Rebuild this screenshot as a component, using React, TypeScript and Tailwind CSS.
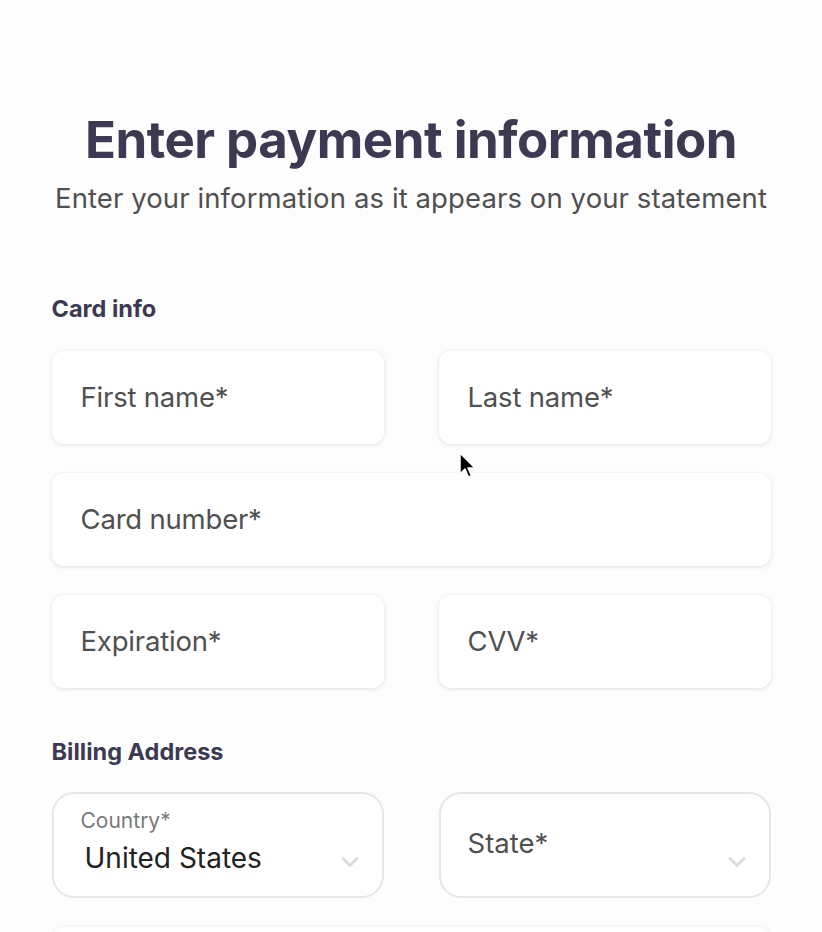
import { ChevronDown } from "lucide-react";

function TextField({ label }: { label: string }) {
  return (
    <div className="h-[93px] rounded-[12px] bg-white shadow-[0_1px_4px_rgba(0,0,0,0.12)] flex items-center px-[29px]">
      <span className="text-[27.5px] text-[#505050] tracking-[-0.2px]">{label}</span>
    </div>
  );
}

function SelectField({ label, value }: { label: string; value?: string }) {
  return (
    <div className="relative h-[106px] rounded-[22px] bg-white border-2 border-[#e6e6e6] flex flex-col justify-center pl-[27px] pr-[20px]">
      {value ? (
        <>
          <span className="text-[21px] text-[#7a7a7a] leading-none mt-[-8px]">{label}</span>
          <span className="text-[28px] text-[#222222] leading-none mt-[13px] pl-[4px]">{value}</span>
        </>
      ) : (
        <span className="text-[27.5px] text-[#505050] leading-none mt-[-2px]">{label}</span>
      )}
      <ChevronDown
        className="absolute right-[18px] top-[54px] text-[#dcdcdc]"
        size={28}
        strokeWidth={2.5}
      />
    </div>
  );
}

export default function App() {
  return (
    <div className="relative h-[932px] bg-[#fdfdfd] overflow-hidden font-['Inter',sans-serif]">
      <div className="w-[719px] mx-auto pt-[108px]">
        <h1 className="text-center text-[51px] font-bold text-[#3c3a52] leading-[64px] tracking-[-0.5px]">
          Enter payment information
        </h1>
        <p className="text-center text-[27.5px] text-[#505050] leading-[36px] mt-[8px] tracking-[0.1px] whitespace-nowrap">
          Enter your information as it appears on your statement
        </p>

        <h2 className="mt-[78px] text-[23.5px] font-bold text-[#3c3a52] leading-[30px]">Card info</h2>
        <div className="mt-[27px] flex flex-col gap-[29px]">
          <div className="grid grid-cols-2 gap-[55px]">
            <TextField label="First name*" />
            <TextField label="Last name*" />
          </div>
          <TextField label="Card number*" />
          <div className="grid grid-cols-2 gap-[55px]">
            <TextField label="Expiration*" />
            <TextField label="CVV*" />
          </div>
        </div>

        <h2 className="mt-[49px] text-[23.5px] font-bold text-[#3c3a52] leading-[30px]">Billing Address</h2>
        <div className="mt-[25px] grid grid-cols-2 gap-[55px]">
          <SelectField label="Country*" value="United States" />
          <SelectField label="State*" />
        </div>
        <div className="mt-[29px]">
          <TextField label="" />
        </div>
      </div>

      <svg
        className="absolute left-[458px] top-[452px]"
        width="20"
        height="30"
        viewBox="0 0 20 30"
      >
        <path
          d="M2 1 L2 22 L7 17 L10.5 25 L13.5 23.7 L10 16 L17 16 Z"
          fill="#000"
          stroke="#fff"
          strokeWidth="1.5"
          strokeLinejoin="round"
        />
      </svg>
    </div>
  );
}
